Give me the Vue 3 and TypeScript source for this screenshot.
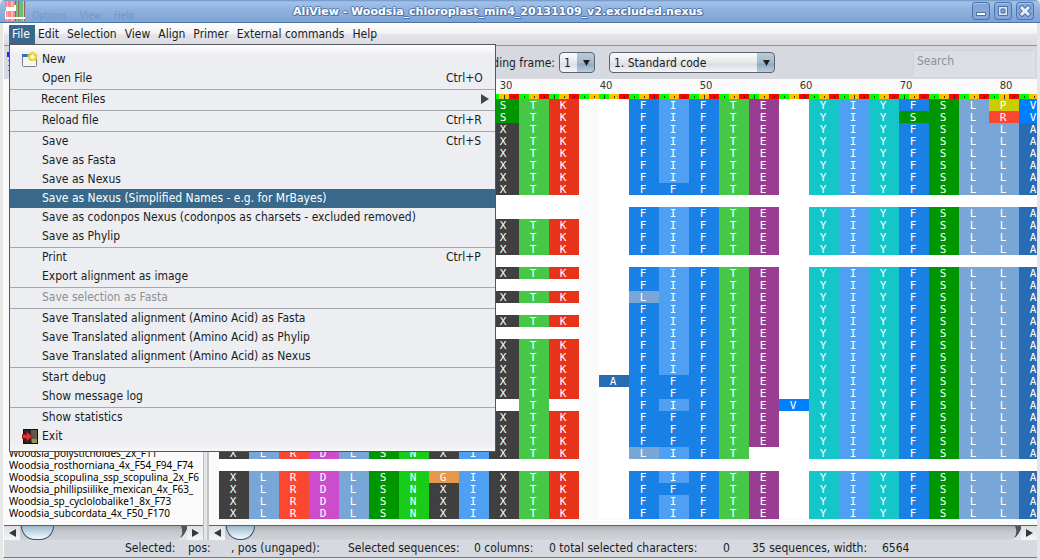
<script setup lang="ts">
import { ref } from 'vue'

interface MenuEntry {
  label?: string
  shortcut?: string
  icon?: 'new' | 'exit'
  submenu?: boolean
  active?: boolean
  disabled?: boolean
}

const menus = ['File', 'Edit', 'Selection', 'View', 'Align', 'Primer', 'External commands', 'Help']

const entries: MenuEntry[] = [
  { label: 'New', icon: 'new' },
  { label: 'Open File', shortcut: 'Ctrl+O' },
  {},
  { label: 'Recent Files', submenu: true },
  {},
  { label: 'Reload file', shortcut: 'Ctrl+R' },
  {},
  { label: 'Save', shortcut: 'Ctrl+S' },
  { label: 'Save as Fasta' },
  { label: 'Save as Nexus' },
  { label: 'Save as Nexus (Simplified Names - e.g. for MrBayes)', active: true },
  { label: 'Save as codonpos Nexus (codonpos as charsets - excluded removed)' },
  { label: 'Save as Phylip' },
  {},
  { label: 'Print', shortcut: 'Ctrl+P' },
  { label: 'Export alignment as image' },
  {},
  { label: 'Save selection as Fasta', disabled: true },
  {},
  { label: 'Save Translated alignment (Amino Acid) as Fasta' },
  { label: 'Save Translated alignment (Amino Acid) as Phylip' },
  { label: 'Save Translated alignment (Amino Acid) as Nexus' },
  {},
  { label: 'Start debug' },
  { label: 'Show message log' },
  {},
  { label: 'Show statistics' },
  { label: 'Exit', icon: 'exit' },
]

const names = [
  'Woodsia_polystichoides_2x_F11',
  'Woodsia_rosthorniana_4x_F54_F94_F74',
  'Woodsia_scopulina_ssp_scopulina_2x_F6',
  'Woodsia_phillipsiilike_mexican_4x_F63_',
  'Woodsia_sp_cyclolobalike1_8x_F73',
  'Woodsia_subcordata_4x_F50_F170',
]

const lead = ' '.repeat(9)
const tail = 'YIYFSLLA'
const full = lead + 'XTK. FIFTE ' + tail
const noStart = lead + '   . FIFTE ' + tail
const blank = lead + '   .       ' + ' '.repeat(8)
const ff = lead + 'XTK. FFFTE ' + tail

// One character per amino acid; '.' is an incomplete codon two bases wide.
const rows: string[] = [
  lead + 'STK. FIFTE YIYFSLPV',
  lead + 'STK. FIFTE YIYSSLRV',
  full, full, full, full, full,
  ff,
  blank,
  noStart,
  full, full, full,
  blank,
  full,
  noStart,
  lead + 'XTK. LIFTE ' + tail,
  noStart,
  full,
  noStart,
  full, full, full,
  lead + 'XTK.AFFFTE ' + tail,
  ff,
  lead + ' T . FIFTEV' + tail,
  ff, ff, ff,
  'XLRDLSNXIXTK. LIFT  ' + tail,
  blank,
  'XLRDLSNGIXTK. FIFTE ' + tail,
  'XLRDLSNXIXTK. FFFTE ' + tail,
  'XLRDLSNXIXTK. FIFTE ' + tail,
  'XLRDLSNXIXTK. FIFTE ' + tail,
]

function cellClass(ch: string): string {
  if (ch === '.') return 'gap'
  return ch === ' ' ? 'none' : 'aa-' + ch.toLowerCase()
}

const bases: { pos: number; codon: number }[] = []
let pos = 2
for (const ch of full) {
  const n = ch === '.' ? 2 : 3
  for (let c = 0; c < n; c++) bases.push({ pos: pos++, codon: c })
}

const rulerLabels = [30, 40, 50, 60, 70, 80]
const frame = ref('1')
const code = ref('standard')
const search = ref('')
</script>

<template>
  <div class="window">
    <header class="titlebar">
      <svg class="logo" width="21" height="20" viewBox="0 0 21 20">
        <rect width="21" height="20" fill="#f58a90" />
        <path d="M2 0h1v20H2zM6 0h2v20H6zM18 0h1v20h-1z" fill="#f9b3bb" />
        <path d="M11 0h1v20h-1zM14 0h4v20h-4z" fill="#62c46c" />
        <path d="M10 0h1v20h-1zM13 0h1v20h-1zM19 0h1v20h-1z" fill="#9a5d68" />
        <path d="M1 6h10v4H1zM9 4h2v6H9zM0 16h20v2H0zM0 10h1v6H0z" fill="#fff" />
      </svg>
      <div class="ghost" aria-hidden="true"><span>Options</span><span>View</span><span>Help</span></div>
      <h1>AliView - Woodsia_chloroplast_min4_20131109_v2.excluded.nexus</h1>
      <div class="controls">
        <button type="button" aria-label="Minimize">
          <svg width="18" height="18" viewBox="0 0 18 18"><rect x="4.500" y="10.500" width="9" height="3" fill="#fff" stroke="#4a74ae" /></svg>
        </button>
        <button type="button" aria-label="Maximize">
          <svg width="18" height="18" viewBox="0 0 18 18"><path d="M4.500 4.500h9v9h-9z" fill="#dbe7f6" stroke="#4a74ae" /><path d="M7 7h4v4H7z" fill="#7b9fd0" stroke="#4a74ae" /></svg>
        </button>
        <button type="button" aria-label="Close">
          <svg width="18" height="18" viewBox="0 0 18 18"><path d="M6 6l6 6M12 6l-6 6" stroke="#4a74ae" stroke-width="5" stroke-linecap="square" /><path d="M6 6l6 6M12 6l-6 6" stroke="#e6eefa" stroke-width="3" stroke-linecap="square" /></svg>
        </button>
      </div>
    </header>

    <div class="body">
      <nav class="menubar">
        <button v-for="m in menus" :key="m" type="button" :class="{ open: m === 'File' }">{{ m }}</button>
      </nav>

      <div class="popup" role="menu">
        <template v-for="(e, i) in entries" :key="i">
          <hr v-if="!e.label" />
          <button v-else type="button" role="menuitem" :class="{ active: e.active, sub: e.submenu }" :disabled="e.disabled">
            <span class="icon">
              <svg v-if="e.icon === 'new'" width="17" height="17" viewBox="0 0 17 17">
                <rect x="0.500" y="3.500" width="14" height="12" rx="1" fill="#f4f5f6" stroke="#7c7f85" />
                <path d="M0 3h12v3H0z" fill="#3c6eb0" />
                <circle cx="10.500" cy="5.500" r="5" fill="#f3e04a" opacity=".8" />
                <path d="M10.500 1.500l1.300 2.600 2.900.4-2.100 2 .5 2.900-2.600-1.400-2.600 1.400.5-2.900-2.100-2 2.900-.4z" fill="#fffbd0" stroke="#e3c800" />
              </svg>
              <svg v-else-if="e.icon === 'exit'" width="17" height="17" viewBox="0 0 17 17">
                <rect x="1.500" y="1.500" width="14" height="14" fill="#25261f" stroke="#111" />
                <path d="M9 2h6v12H9z" fill="#5b5c4e" />
                <path d="M10 11h5v4h-5z" fill="#97974a" />
                <path d="M0.500 6.500h4v-3l6 5-6 5v-3h-4z" fill="#d9333c" stroke="#8f1219" />
              </svg>
            </span>
            <span class="label">{{ e.label }}</span>
            <svg v-if="e.submenu" class="arrow" width="8" height="10" viewBox="0 0 8 10"><path d="M0 0l8 5-8 5z" fill="#42464c" /></svg>
            <kbd v-if="e.shortcut">{{ e.shortcut }}</kbd>
          </button>
        </template>
      </div>

      <div class="toolbar">
        <svg class="grip" width="3" height="21" viewBox="0 0 3 21">
          <path d="M0 0h3v5H0z" fill="#2a2ae6" />
          <path d="M1 8h1v1H1zM1 13h1v1H1zM1 18h1v1H1z" fill="#6a6ad8" />
        </svg>
        <label for="frame">Reading frame:</label>
        <span class="combo small">
          <select id="frame" v-model="frame"><option value="1">1</option></select>
          <svg width="7" height="6" viewBox="0 0 8 7"><path d="M0 0h8L4 7z" fill="#1d1f22" /></svg>
        </span>
        <span class="combo">
          <select v-model="code" aria-label="Genetic code"><option value="standard">1. Standard code</option></select>
          <svg width="7" height="6" viewBox="0 0 8 7"><path d="M0 0h8L4 7z" fill="#1d1f22" /></svg>
        </span>
        <input v-model="search" type="text" placeholder="Search" aria-label="Search" />
      </div>

      <main>
        <section class="names">
          <ul>
            <li v-for="n in names" :key="n">{{ n }}</li>
          </ul>
          <div class="scroll">
            <button type="button" aria-label="Scroll left"><svg width="7" height="8" viewBox="0 0 7 8"><path d="M7 0v8L0 4z" fill="#33363b" /></svg></button>
            <div class="thumb"></div>
            <svg class="curl" width="9" height="14" viewBox="0 0 9 14">
              <path d="M4 0Q7 8 0 14h9V0z" fill="#e2e4e8" />
              <path d="M3 0h6v3Q6 10 2 12 6 7 3 0z" fill="#4f5257" />
            </svg>
            <button type="button" aria-label="Scroll right"><svg width="7" height="8" viewBox="0 0 7 8"><path d="M0 0v8l7-4z" fill="#33363b" /></svg></button>
          </div>
        </section>
        <div class="splitter"></div>
        <section class="alignment">
          <div class="view">
            <div class="labels"><span v-for="r in rulerLabels" :key="r">{{ r }}</span></div>
            <div class="ruler">
              <i v-for="b in bases" :key="b.pos" :class="['c' + b.codon, { tall: b.pos % 5 === 0 }]"></i>
            </div>
            <div class="rows">
              <div v-for="(row, r) in rows" :key="r" class="row">
                <span v-for="(ch, c) in row.split('')" :key="c" :class="cellClass(ch)">{{ ch === '.' ? '' : ch }}</span>
              </div>
            </div>
          </div>
          <div class="scroll">
            <button type="button" aria-label="Scroll left"><svg width="7" height="8" viewBox="0 0 7 8"><path d="M7 0v8L0 4z" fill="#33363b" /></svg></button>
            <div class="thumb narrow"></div>
            <svg class="curl" width="9" height="14" viewBox="0 0 9 14">
              <path d="M4 0Q7 8 0 14h9V0z" fill="#e2e4e8" />
              <path d="M3 0h6v3Q6 10 2 12 6 7 3 0z" fill="#4f5257" />
            </svg>
            <button type="button" aria-label="Scroll right"><svg width="7" height="8" viewBox="0 0 7 8"><path d="M0 0v8l7-4z" fill="#33363b" /></svg></button>
          </div>
        </section>
      </main>

      <footer class="status">
        <span class="s1">Selected:</span>
        <span class="s2">pos:</span>
        <span class="s3">, pos (ungaped):</span>
        <span class="s4">Selected sequences:</span>
        <span class="s5">0 columns:</span>
        <span class="s6">0 total selected characters:</span>
        <span class="s7">0</span>
        <span class="s8">35 sequences, width:</span>
        <span>6564</span>
      </footer>
    </div>
  </div>
</template>

<style>
body {
  margin: 0;
}
</style>

<style scoped>
.window {
  box-sizing: border-box;
  min-height: 100vh;
  display: flex;
  flex-direction: column;
  background: #e6e6e6;
  font-family: 'DejaVu Sans Condensed', 'DejaVu Sans', sans-serif;
  font-size: 12px;
  line-height: 16px;
  color: #1a1c1f;
  overflow: hidden;
}
button,
input,
select,
kbd {
  font: inherit;
  color: inherit;
}
button {
  border: 0;
  padding: 0;
  background: none;
}
.titlebar {
  position: relative;
  box-sizing: border-box;
  height: 23px;
  display: flex;
  align-items: center;
  justify-content: center;
  background: linear-gradient(#6b92c8 0, #a4c2e8 2px, #90b1dd 10px, #80a4d5 21px);
  border-bottom: 1px solid #4a74ae;
  border-radius: 5px 5px 0 0;
}
.logo {
  position: absolute;
  left: 5px;
  top: 1px;
}
.ghost {
  position: absolute;
  left: 32px;
  top: 9px;
  display: flex;
  gap: 13px;
  font-size: 10px;
  line-height: 13px;
  color: #6a8fc4;
  opacity: 0.7;
}
h1 {
  margin: 0;
  padding: 2px 44px 0 0;
  font-family: 'DejaVu Sans', sans-serif;
  font-size: 11px;
  font-weight: bold;
  color: #fff;
  text-shadow: 1px 0 #4a74ae, -1px 0 #4a74ae, 0 1px #4a74ae, 0 -1px #4a74ae, 1px 1px #4a74ae;
}
.controls {
  position: absolute;
  right: 6px;
  top: 2px;
  display: flex;
  gap: 4px;
}
.controls button {
  box-sizing: border-box;
  width: 18px;
  height: 18px;
  border-radius: 4px;
  box-shadow: inset 0 0 0 1px #4a74ae, inset 1px 2px 0 #a9c4e8;
  background: #84a7d7;
  display: flex;
}
.body {
  position: relative;
  flex: 1;
  display: flex;
  flex-direction: column;
  margin: 0 3px 2px;
  background: #d6d9df;
  border-left: 1px solid #fafafa;
  border-bottom: 1px solid #777a80;
}
.menubar {
  box-sizing: border-box;
  height: 23px;
  display: flex;
  padding: 2px 0 1px 5px;
  background: linear-gradient(#fff, #f3f3f5 10px, #e3e4e8 12px, #d9dbe1);
  border-bottom: 1px solid #8f939d;
}
.menubar button {
  padding: 0 5px 1px 3px;
  line-height: 16px;
  white-space: nowrap;
}
.menubar .open {
  background: #39698a;
  color: #fff;
}
.popup {
  position: absolute;
  z-index: 2;
  left: 5px;
  top: 21px;
  box-sizing: border-box;
  width: 487px;
  padding: 5px 0;
  border: 1px solid #55585c;
  background: linear-gradient(#fff, #edeef2 10px, #edeef2 396px, #f6f6f8);
  display: flex;
  flex-direction: column;
}
.popup button {
  height: 19px;
  display: flex;
  align-items: center;
  padding: 0 9px 1px 12px;
  line-height: 18px;
  text-align: left;
}
.popup .active {
  background: #39698a;
  color: #fff;
}
.popup button:disabled {
  color: #8e8f91;
}
.popup hr {
  width: 100%;
  box-sizing: border-box;
  height: 2px;
  margin: 0;
  border: 0;
  border-bottom: 1px solid #a6a9b0;
}
.icon {
  width: 20px;
  height: 17px;
}
.sub .icon {
  width: 19px;
}
.label {
  flex: 1;
  white-space: nowrap;
}
.arrow {
  margin-right: -3px;
}
kbd {
  width: 40px;
}
.toolbar {
  box-sizing: border-box;
  height: 33px;
  display: flex;
  align-items: center;
  padding: 0 3px;
}
.grip {
  margin-right: 458px;
}
.toolbar label {
  width: 87px;
  margin-right: 4px;
  white-space: nowrap;
  text-align: right;
}
.combo {
  position: relative;
  width: 166px;
}
.combo.small {
  width: 36px;
  margin-right: 14px;
}
.combo select {
  appearance: none;
  box-sizing: border-box;
  width: 100%;
  height: 21px;
  padding: 0 18px 0 4px;
  display: block;
  border: 1px solid #5c6470;
  border-radius: 4px;
  background: linear-gradient(#b9cbda, #a3b8cb 10px, #8fa9bf 11px, #b8cfe0) right / 17px 100% no-repeat,
    linear-gradient(#fcfcfd, #e4e6ea 10px, #dadde3 11px, #f4f5f7);
}
.combo svg {
  position: absolute;
  right: 5px;
  top: 8px;
  pointer-events: none;
}
.toolbar input {
  box-sizing: border-box;
  width: 121px;
  height: 26px;
  margin-left: auto;
  padding: 0 3px 3px;
  border: 1px solid #d0d3d7;
  border-right-color: #e4e6e9;
  border-bottom-color: #e4e6e9;
  background: #dbdee2;
}
.toolbar input::placeholder {
  color: #8e9196;
  opacity: 1;
}
main {
  flex: 1;
  display: grid;
  grid-template-columns: 199px 6px minmax(0, 1fr);
}
.names,
.alignment {
  display: flex;
  flex-direction: column;
  min-width: 0;
  background: #fafafa;
}
.names {
  justify-content: flex-end;
}
.names ul {
  list-style: none;
  margin: 0 0 6px;
  padding: 0 0 0 5px;
  overflow: hidden;
  font-family: 'Noto Sans', sans-serif;
  font-size: 10px;
  line-height: 12px;
  white-space: nowrap;
  color: #000;
}
.splitter {
  background: linear-gradient(90deg, #b9bcc3 0 1px, #e3e5e9 1px 4px, #c0c3ca 4px);
}
.view {
  flex: 1;
  overflow: hidden;
  padding-bottom: 6px;
}
.labels {
  display: flex;
  height: 15px;
  padding-left: 247px;
  font-family: 'DejaVu Sans', sans-serif;
  font-size: 10px;
  line-height: 13px;
  color: #333;
}
.labels span {
  flex: none;
  width: 100px;
  text-align: center;
}
.ruler {
  display: flex;
  height: 5px;
  padding-left: 10px;
}
.ruler i {
  flex: none;
  width: 10px;
  display: flex;
  justify-content: center;
  align-items: center;
}
.ruler i::before {
  content: '';
  width: 1px;
  height: 2px;
  background: #333;
}
.ruler .tall::before {
  height: 4px;
}
.c0 { background: #0f0; }
.c1 { background: #ffc200; }
.c2 { background: #f00; }
.rows {
  padding-left: 10px;
}
.row {
  display: flex;
  height: 12px;
  background: #fff;
  font-family: 'DejaVu Sans Mono', monospace;
  font-size: 11px;
  line-height: 14px;
  color: #fff;
}
.row span {
  box-sizing: border-box;
  flex: none;
  width: 30px;
  padding-right: 2px;
  text-align: center;
}
.row .gap {
  width: 20px;
  background: #fafafa;
}
.row .none { background: #fff; }
.aa-x { background: #404040; }
.aa-t { background: #46c846; }
.aa-k { background: #e6331a; }
.aa-s { background: #009600; }
.aa-f { background: #1980e6; }
.aa-i { background: #4f9ff3; }
.aa-e { background: #993d93; }
.aa-y { background: #15c6c8; }
.aa-l { background: #78a6d6; }
.aa-p { background: #cccc00; }
.aa-r { background: #f9482f; }
.aa-v { background: #0080ff; }
.aa-a { background: #286cb4; }
.aa-d { background: #cc4dcc; }
.aa-n { background: #1acc1a; }
.aa-g { background: #e6994d; }
.scroll {
  box-sizing: border-box;
  height: 15px;
  display: flex;
  overflow: hidden;
  border-top: 1px solid #5f6267;
  background: linear-gradient(#a9acb1, #c3c6cb 5px, #d0d3d8);
}
.scroll button {
  width: 16px;
  display: flex;
  align-items: center;
  justify-content: center;
  background: linear-gradient(#dddfe3, #f4f5f6);
}
.thumb {
  box-sizing: border-box;
  width: 33px;
  height: 14px;
  margin-left: 1px;
  border: 1px solid #36546e;
  border-top: 0;
  border-radius: 0 0 16px 16px;
  background: linear-gradient(#9fb5c7, #c4d9e8 6px, #eefaff);
}
.thumb.narrow {
  width: 29px;
}
.curl {
  margin-left: auto;
}
.status {
  height: 17px;
  display: flex;
  padding-left: 121px;
  white-space: nowrap;
}
.status span {
  flex: none;
}
.s1 { width: 63px; }
.s2 { width: 43px; }
.s3 { width: 117px; }
.s4 { width: 126px; }
.s5 { width: 75px; }
.s6 { width: 174px; }
.s7 { width: 29px; }
.s8 { width: 130px; }
</style>
